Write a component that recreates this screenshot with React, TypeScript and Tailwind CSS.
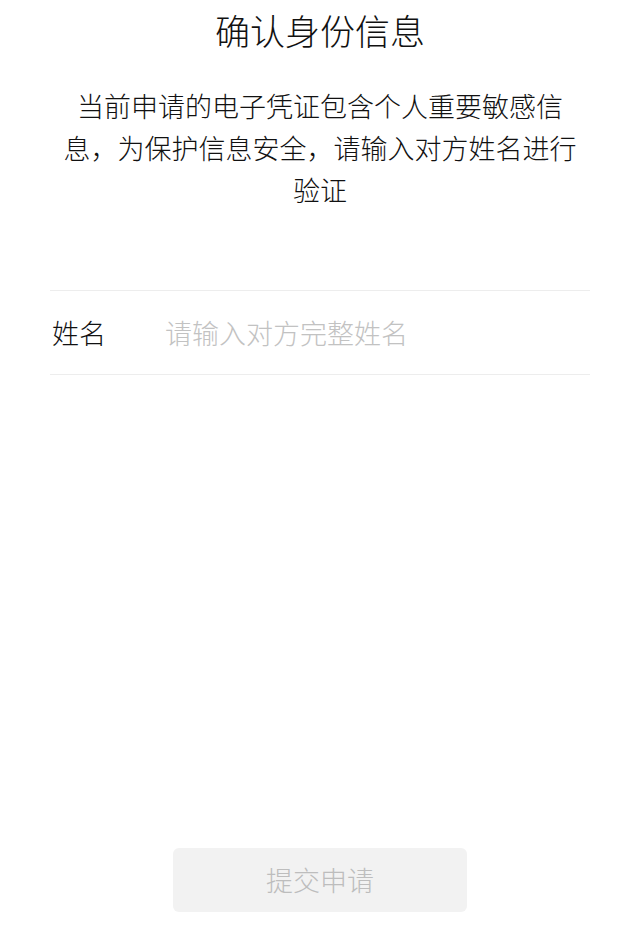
import { useState } from 'react'

export default function App() {
  const [name, setName] = useState('')

  return (
    <div
      className="min-h-screen flex flex-col bg-white font-light text-[#111]"
      style={{ fontFamily: '"Noto Sans CJK SC", "Noto Sans", sans-serif' }}
    >
      {/* Header */}
      <h1 className="pt-[6px] text-center text-[35px] leading-[48px] font-light">确认身份信息</h1>
      <p className="mt-[31px] px-[54px] text-center text-[27px] leading-[42px]">
        当前申请的电子凭证包含个人重要敏感信息，为保护信息安全，请输入对方姓名进行验证
      </p>

      {/* Name field */}
      <div className="mx-[50px] mt-[79px] flex h-[85px] items-center border-y border-[#ededed]">
        <label className="w-[115px] shrink-0 pl-[2px] text-[27px] leading-none">姓名</label>
        <input
          value={name}
          onChange={(e) => setName(e.target.value)}
          placeholder="请输入对方完整姓名"
          className="min-w-0 flex-1 bg-transparent text-[27px] leading-none outline-none placeholder:text-[#c2c2c2]"
        />
      </div>

      {/* Submit */}
      <div className="mt-auto flex justify-center pb-[27px]">
        <button
          disabled={!name}
          className="h-[64px] w-[294px] rounded-[6px] bg-[#f2f2f2] text-[27px] font-light text-[#bdbdbd]"
        >
          提交申请
        </button>
      </div>
    </div>
  )
}
